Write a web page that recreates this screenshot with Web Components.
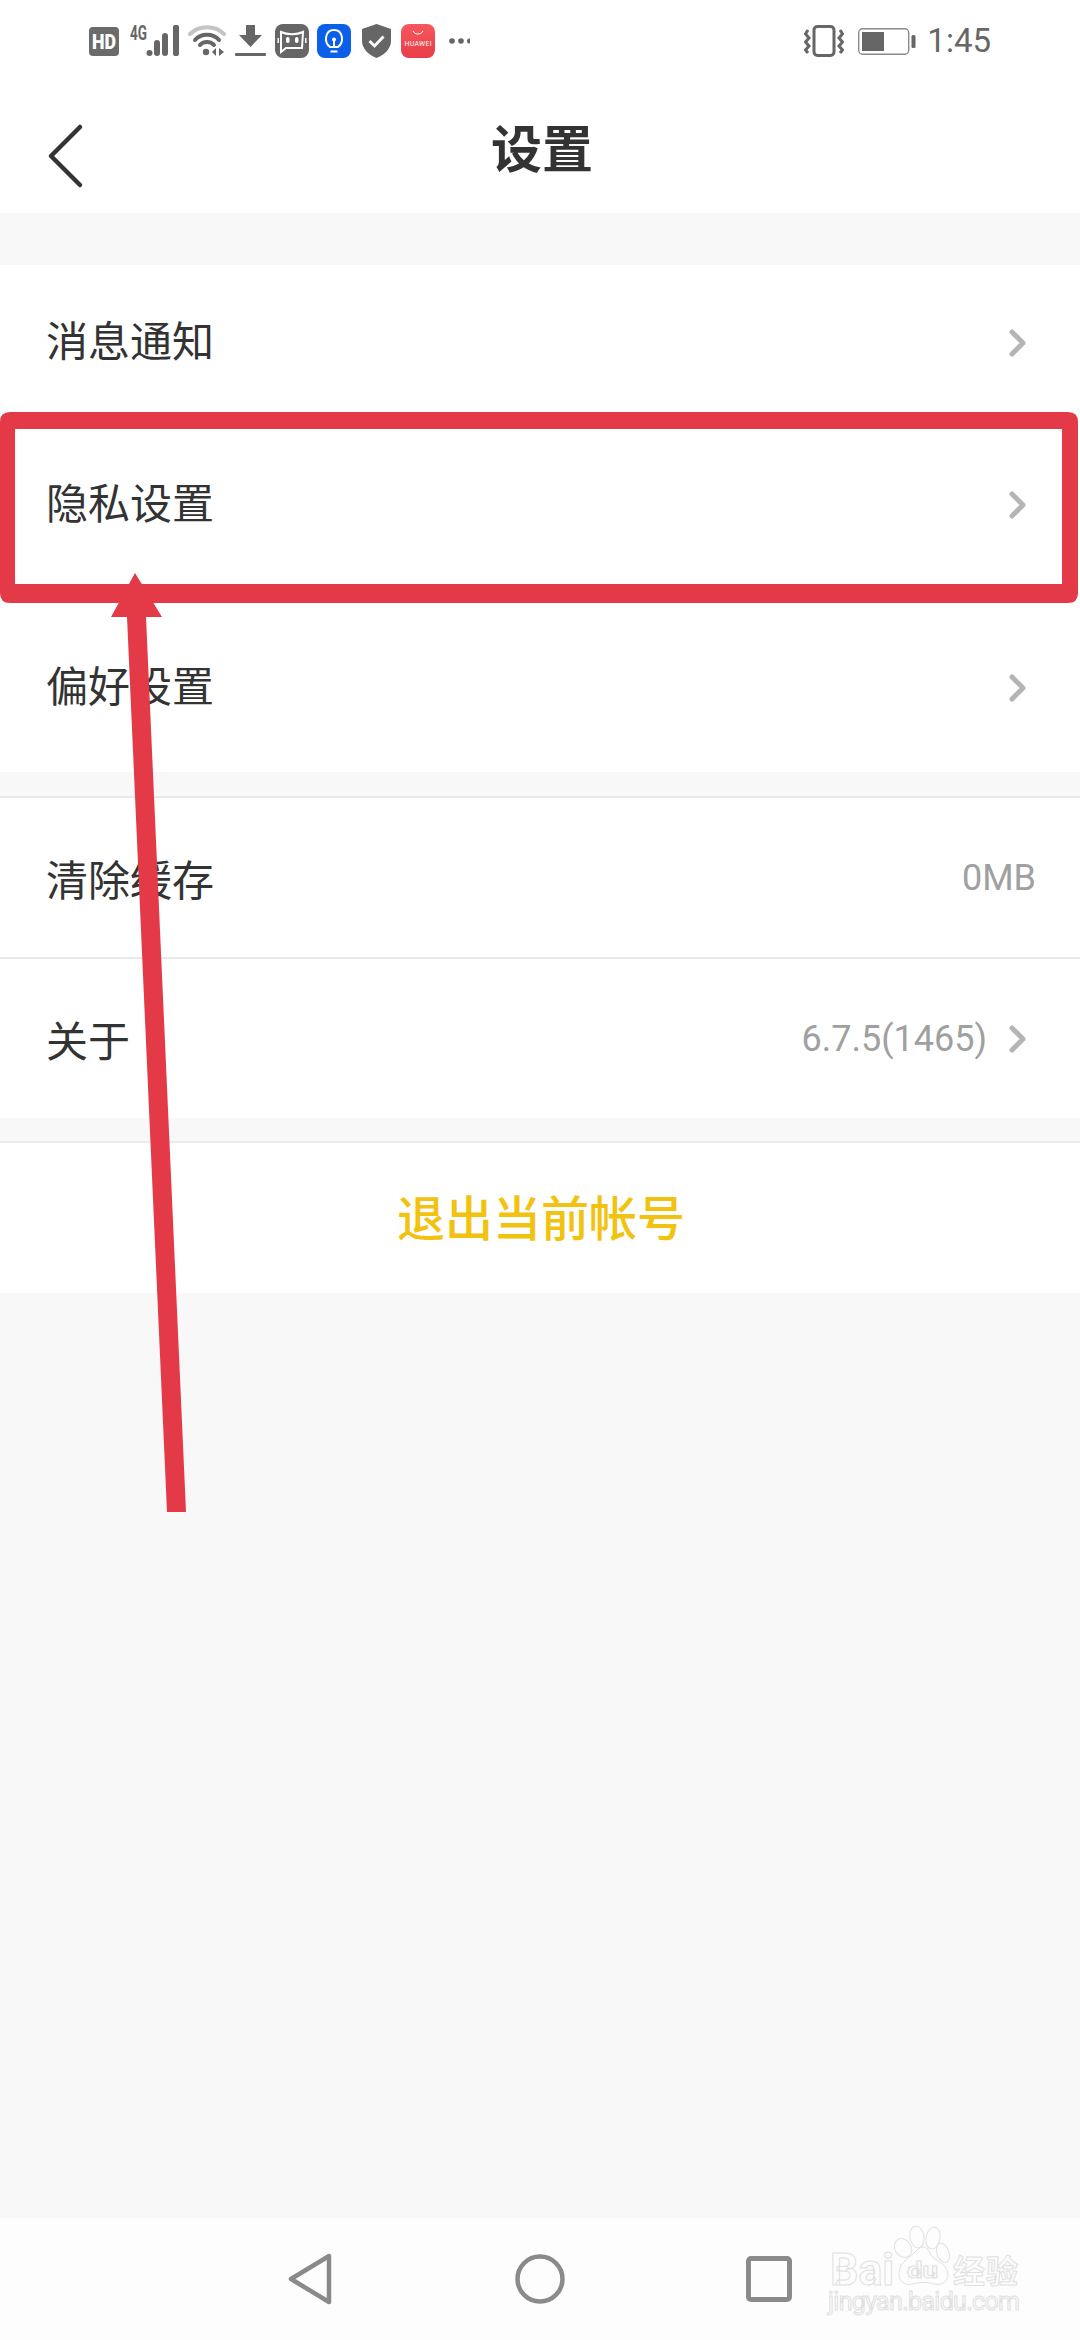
<!DOCTYPE html>
<html lang="zh">
<head>
<meta charset="utf-8">
<title>设置</title>
<style>
  html, body { margin: 0; height: 100%; background: #f8f8f8; }
  body { font-family: "Noto Sans CJK SC", "Noto Sans", sans-serif; }
</style>
</head>
<body>
<settings-page>
  <status-bar slot="top"></status-bar>
  <app-header slot="top" title="设置"></app-header>

  <setting-group style="--group-top: 52px;">
    <setting-row label="消息通知" arrow style="--row-height: 152px; --row-pad-bottom: 9px; --arrow-top: 9px;"></setting-row>
    <setting-row label="隐私设置" arrow style="--row-height: 172px; --row-pad-bottom: 9px; --arrow-top: 9px;"></setting-row>
    <setting-row label="偏好设置" arrow style="--row-height: 181px; --row-pad-top: 4px; --arrow-top: 9px;"></setting-row>
  </setting-group>

  <setting-group style="--group-top: 26px; --group-border: #e8e8e8;">
    <setting-row label="清除缓存" value="0MB" divider style="--row-height: 161px;"></setting-row>
    <setting-row label="关于" value="6.7.5(1465)" arrow style="--row-height: 159px;"></setting-row>
  </setting-group>

  <logout-button>退出当前帐号</logout-button>

  <nav-bar slot="bottom"></nav-bar>
  <red-annotation slot="over"></red-annotation>
</settings-page>

<script>
class SettingsPage extends HTMLElement {
  constructor() {
    super();
    this.attachShadow({ mode: 'open' });
  }

  connectedCallback() {
    this.shadowRoot.innerHTML = /* html */ `
    <style>
      :host {
        display: flex;
        flex-direction: column;
        position: relative;
        width: 1080px;
        height: 2340px;
        overflow: hidden;
        background: #f8f8f8;
      }
      .content { flex: 1; display: flex; flex-direction: column; }
    </style>
    <slot name="top"></slot>
    <div class="content"><slot></slot></div>
    <slot name="bottom"></slot>
    <slot name="over"></slot>`;
  }
}

class StatusBar extends HTMLElement {
  constructor() {
    super();
    this.attachShadow({ mode: 'open' });
  }

  connectedCallback() {
    this.shadowRoot.innerHTML = /* html */ `
    <style>
      :host {
        display: flex;
        align-items: center;
        height: 80px;
        padding: 2px 89px 0 89px;
        box-sizing: border-box;
        background: #fff;
        color: #666;
        font-family: Roboto, sans-serif;
      }
      svg { display: block; flex: none; }
      .spacer { flex: 1; }
      .time { font-size: 33px; margin-left: 11px; line-height: 78px; color: #666; }
    </style>
    <svg width="30" height="29" viewBox="0 0 30 29">
      <rect width="30" height="29" rx="4" fill="#6b6b6b"/>
      <text x="15" y="22" text-anchor="middle" font-family="Roboto" font-weight="900" font-size="20" fill="#fff" textLength="24" lengthAdjust="spacingAndGlyphs">HD</text>
    </svg>
    <svg width="50" height="44" viewBox="0 -6 50 44" style="margin-left:11px">
      <text x="0" y="15" font-family="Roboto" font-weight="700" font-size="20" fill="#666" textLength="17" lengthAdjust="spacingAndGlyphs">4G</text>
      <circle cx="19.500" cy="28" r="3" fill="#666"/>
      <rect x="24" y="15" width="6" height="16" rx="3" fill="#666"/>
      <rect x="32" y="8" width="6" height="23" rx="3" fill="#666"/>
      <rect x="43" y="0" width="6" height="31" rx="2" fill="#666"/>
    </svg>
    <svg width="38" height="32" viewBox="0 0 38 32" style="margin-left:8px" fill="none" stroke-linecap="round">
      <path d="M2 9 C11 0 27 0 36 9" stroke="#c4c4c4" stroke-width="4"/>
      <path d="M7 15 C13 8 25 8 31 15" stroke="#666" stroke-width="4"/>
      <path d="M12 20 C15 16 23 16 26 20" stroke="#666" stroke-width="4"/>
      <circle cx="18" cy="27" r="3.200" fill="#666"/>
      <path d="M28 23 L24 27 L28 31 Z" fill="#666"/>
      <path d="M31 23 L36 27 L31 31 Z" fill="#666"/>
    </svg>
    <svg width="31" height="32" viewBox="0 0 31 32" style="margin-left:9px">
      <path d="M11 0 H20 V10 H27 L15.500 22 L4 10 H11 Z" fill="#666"/>
      <rect x="0" y="28" width="31" height="3" rx="1" fill="#666"/>
    </svg>
    <svg width="34" height="34" viewBox="0 0 34 34" style="margin-left:9px">
      <rect width="34" height="34" rx="8" fill="#666"/>
      <path d="M6 8 C12 11 22 11 28 8 L27 24 H11 L6 28 Z" fill="none" stroke="#fff" stroke-width="2"/>
      <rect x="11" y="13" width="3.500" height="6" rx="1.700" fill="#fff"/>
      <rect x="20" y="13" width="3.500" height="6" rx="1.700" fill="#fff"/>
      <rect x="2.500" y="14" width="1.500" height="5" fill="#fff"/>
      <rect x="30" y="14" width="1.500" height="5" fill="#fff"/>
    </svg>
    <svg width="34" height="34" viewBox="0 0 34 34" style="margin-left:8px">
      <rect width="34" height="34" rx="8" fill="#0b5fe8"/>
      <path d="M13 23 C6.500 18 8 6 17 6 C26 6 27.500 18 21 23 Z" fill="none" stroke="#fff" stroke-width="2"/>
      <path d="M13.500 27.500 H20.500 M17 23 V16" stroke="#fff" stroke-width="2" fill="none"/>
      <circle cx="17" cy="15.500" r="2" fill="#fff"/>
    </svg>
    <svg width="29" height="34" viewBox="0 0 29 34" style="margin-left:11px">
      <path d="M14.500 0 L29 5 V17 C29 25 22 31 14.500 34 C7 31 0 25 0 17 V5 Z" fill="#666"/>
      <path d="M7.500 17 L12.500 22 L21.500 12.500" fill="none" stroke="#fff" stroke-width="2.800"/>
    </svg>
    <svg width="34" height="34" viewBox="0 0 34 34" style="margin-left:10px">
      <defs><linearGradient id="hw" x1="0" y1="0" x2="0" y2="1"><stop offset="0" stop-color="#f4595c"/><stop offset="1" stop-color="#ea3c48"/></linearGradient></defs>
      <rect width="34" height="34" rx="8" fill="url(#hw)"/>
      <path d="M12 7 C14 11 20 11 22 7" fill="none" stroke="#fff" stroke-width="1"/>
      <text x="17" y="22" text-anchor="middle" font-family="Roboto" font-size="6.800" fill="#fff" textLength="27">HUAWEI</text>
    </svg>
    <svg width="21" height="8" viewBox="0 0 21 8" style="margin-left:14px">
      <circle cx="3" cy="4" r="2.800" fill="#666"/>
      <circle cx="12" cy="4" r="2.800" fill="#666"/>
      <circle cx="20.500" cy="4" r="2.500" fill="#666"/>
    </svg>
    <span class="spacer"></span>
    <svg width="40" height="32" viewBox="0 0 40 32" fill="none" stroke="#666">
      <rect x="10" y="1.500" width="20" height="29" rx="3.500" stroke-width="3"/>
      <path d="M4 5 L1.500 9 L5 13 L1.500 17 L5 21 L1.500 25 L4 28" stroke-width="3"/>
      <path d="M36 5 L38.500 9 L35 13 L38.500 17 L35 21 L38.500 25 L36 28" stroke-width="3"/>
    </svg>
    <svg width="58" height="27" viewBox="0 0 58 27" style="margin-left:14px">
      <rect x="0.700" y="0.700" width="50" height="25.600" rx="4" fill="none" stroke="#8a8a8a" stroke-width="1.400"/>
      <rect x="4" y="4" width="22" height="19" fill="#666"/>
      <rect x="53.500" y="7" width="4" height="13" rx="1.500" fill="#666"/>
    </svg>
    <span class="time">1:45</span>`;
  }
}

class AppHeader extends HTMLElement {
  constructor() {
    super();
    this.attachShadow({ mode: 'open' });
  }

  connectedCallback() {
    this.shadowRoot.innerHTML = /* html */ `
    <style>
      :host {
        display: flex;
        align-items: center;
        justify-content: center;
        position: relative;
        height: 133px;
        background: #fff;
      }
      .title { font-size: 51px; font-weight: 700; color: #333; line-height: 1; margin: 0 0 0 4px; }
      svg { position: absolute; left: 46px; top: 43px; }
    </style>
    <svg width="40" height="66" viewBox="0 0 40 66" fill="none">
      <path d="M34 4 L5 33 L34 62" stroke="#333" stroke-width="4.500" stroke-linecap="round" stroke-linejoin="round"/>
    </svg>
    <div class="title">${this.getAttribute('title')}</div>`;
  }
}

class SettingGroup extends HTMLElement {
  constructor() {
    super();
    this.attachShadow({ mode: 'open' });
  }

  connectedCallback() {
    this.shadowRoot.innerHTML = /* html */ `
    <style>
      :host {
        display: block;
        margin-top: var(--group-top, 0);
        background: #fff;
        border-top: 2px solid var(--group-border, transparent);
        margin-bottom: -2px;
      }
    </style>
    <slot></slot>`;
  }
}

class SettingRow extends HTMLElement {
  constructor() {
    super();
    this.attachShadow({ mode: 'open' });
  }

  connectedCallback() {
    const value = this.getAttribute('value');
    const arrow = this.hasAttribute('arrow');
    const divider = this.hasAttribute('divider');
    this.shadowRoot.innerHTML = /* html */ `
    <style>
      :host {
        display: flex;
        align-items: center;
        box-sizing: border-box;
        height: var(--row-height, 160px);
        padding: var(--row-pad-top, 0) 44px var(--row-pad-bottom, 0) 46px;
        background: #fff;
        ${divider ? 'border-bottom: 2px solid #e8e8e8;' : ''}
      }
      .label { flex: 1; font-size: 42px; color: #333; }
      .value { font-family: Roboto, sans-serif; font-size: 36px; color: #a0a0a0; }
      svg { display: block; margin: var(--arrow-top, 0) 0 0 19px; }
    </style>
    <span class="label">${this.getAttribute('label')}</span>
    ${value ? `<span class="value">${value}</span>` : ''}
    ${arrow ? `<svg width="30" height="32" viewBox="0 0 30 32" fill="none">
      <path d="M6 5 L17 16 L6 27" stroke="#b4b4b4" stroke-width="5" stroke-linecap="round" stroke-linejoin="round"/>
    </svg>` : ''}`;
  }
}

class LogoutButton extends HTMLElement {
  constructor() {
    super();
    this.attachShadow({ mode: 'open' });
  }

  connectedCallback() {
    this.shadowRoot.innerHTML = /* html */ `
    <style>
      :host {
        display: flex;
        align-items: center;
        justify-content: center;
        box-sizing: border-box;
        height: 152px;
        margin-top: 25px;
        padding: 0 0 6px 2px;
        border-top: 2px solid #ececec;
        background: #fff;
        color: #f2c210;
        font-size: 48px;
        font-weight: 500;
      }
    </style>
    <slot></slot>`;
  }
}

class NavBar extends HTMLElement {
  constructor() {
    super();
    this.attachShadow({ mode: 'open' });
  }

  connectedCallback() {
    this.shadowRoot.innerHTML = /* html */ `
    <style>
      :host {
        display: flex;
        align-items: center;
        position: relative;
        box-sizing: border-box;
        height: 122px;
        padding: 0 0 0 286px;
        background: #fdfdfd;
      }
      svg { display: block; flex: none; }
      .mark { position: absolute; left: 826px; top: 5px; }
      .mark text { fill: #fdfdfd; stroke: #e0e0e0; stroke-width: 1; }
    </style>
    <svg width="48" height="54" viewBox="0 0 48 54" fill="none" stroke="#8a8a8a" stroke-width="4.500" stroke-linejoin="round">
      <path d="M43 4 V50 L5 27 Z"/>
    </svg>
    <svg width="54" height="54" viewBox="0 0 54 54" fill="none" stroke="#8a8a8a" stroke-width="4.500" style="margin-left:179px">
      <circle cx="27" cy="27" r="22.500"/>
    </svg>
    <svg width="46" height="46" viewBox="0 0 46 46" fill="none" stroke="#8a8a8a" stroke-width="5" style="margin-left:179px">
      <rect x="2.500" y="2.500" width="41" height="41" rx="2.500"/>
    </svg>
    <svg class="mark" width="200" height="104" viewBox="0 0 200 104">
      <g fill="#fdfdfd" stroke="#e0e0e0" stroke-width="1">
        <ellipse cx="77" cy="25" rx="8" ry="10" transform="rotate(-35 77 25)"/>
        <ellipse cx="91" cy="14" rx="7" ry="11" transform="rotate(-10 91 14)"/>
        <ellipse cx="107" cy="15" rx="7" ry="11" transform="rotate(10 107 15)"/>
        <ellipse cx="117" cy="30" rx="6" ry="10" transform="rotate(-20 117 30)"/>
        <path d="M73 50 C74 38 84 35 91 27 C96 22 101 23 104 30 C108 38 120 40 122 50 C123 58 116 63 108 61 C102 59 92 59 86 61 C79 63 72 58 73 50 Z"/>
      </g>
      <text x="4" y="62" font-family="Roboto" font-size="45" font-weight="700" textLength="64" lengthAdjust="spacingAndGlyphs">Bai</text>
      <text x="81" y="55" font-family="Roboto" font-size="22" font-weight="700" textLength="31" lengthAdjust="spacingAndGlyphs">du</text>
      <text x="127" y="60" font-family="Noto Sans CJK SC" font-size="32" font-weight="700" textLength="65">经验</text>
      <text x="2" y="87" font-family="Roboto" font-size="25" textLength="192">jingyan.baidu.com</text>
    </svg>`;
  }
}

class RedAnnotation extends HTMLElement {
  constructor() {
    super();
    this.attachShadow({ mode: 'open' });
  }

  connectedCallback() {
    // the hand drawn box and arrow sit over the page like a canvas
    this.shadowRoot.innerHTML = /* html */ `
    <style>
      :host { position: absolute; left: 0; top: 0; width: 1080px; height: 2340px; pointer-events: none; }
      svg { display: block; filter: blur(0.5px); }
    </style>
    <svg width="1080" height="2340" viewBox="0 0 1080 2340" fill="#e43a48">
      <path fill-rule="evenodd" d="M10 412 H1068 Q1078 412 1078 422 V593 Q1078 603 1068 603 H10 Q0 603 0 593 V422 Q0 412 10 412 Z M15 429 V584 H1062 V429 Z"/>
      <path d="M135 573 L162 617 L146 617 L186 1512 L167 1512 L127 617 L111 617 Z"/>
    </svg>`;
  }
}

customElements.define('settings-page', SettingsPage);
customElements.define('status-bar', StatusBar);
customElements.define('app-header', AppHeader);
customElements.define('setting-group', SettingGroup);
customElements.define('setting-row', SettingRow);
customElements.define('logout-button', LogoutButton);
customElements.define('nav-bar', NavBar);
customElements.define('red-annotation', RedAnnotation);
</script>
</body>
</html>
